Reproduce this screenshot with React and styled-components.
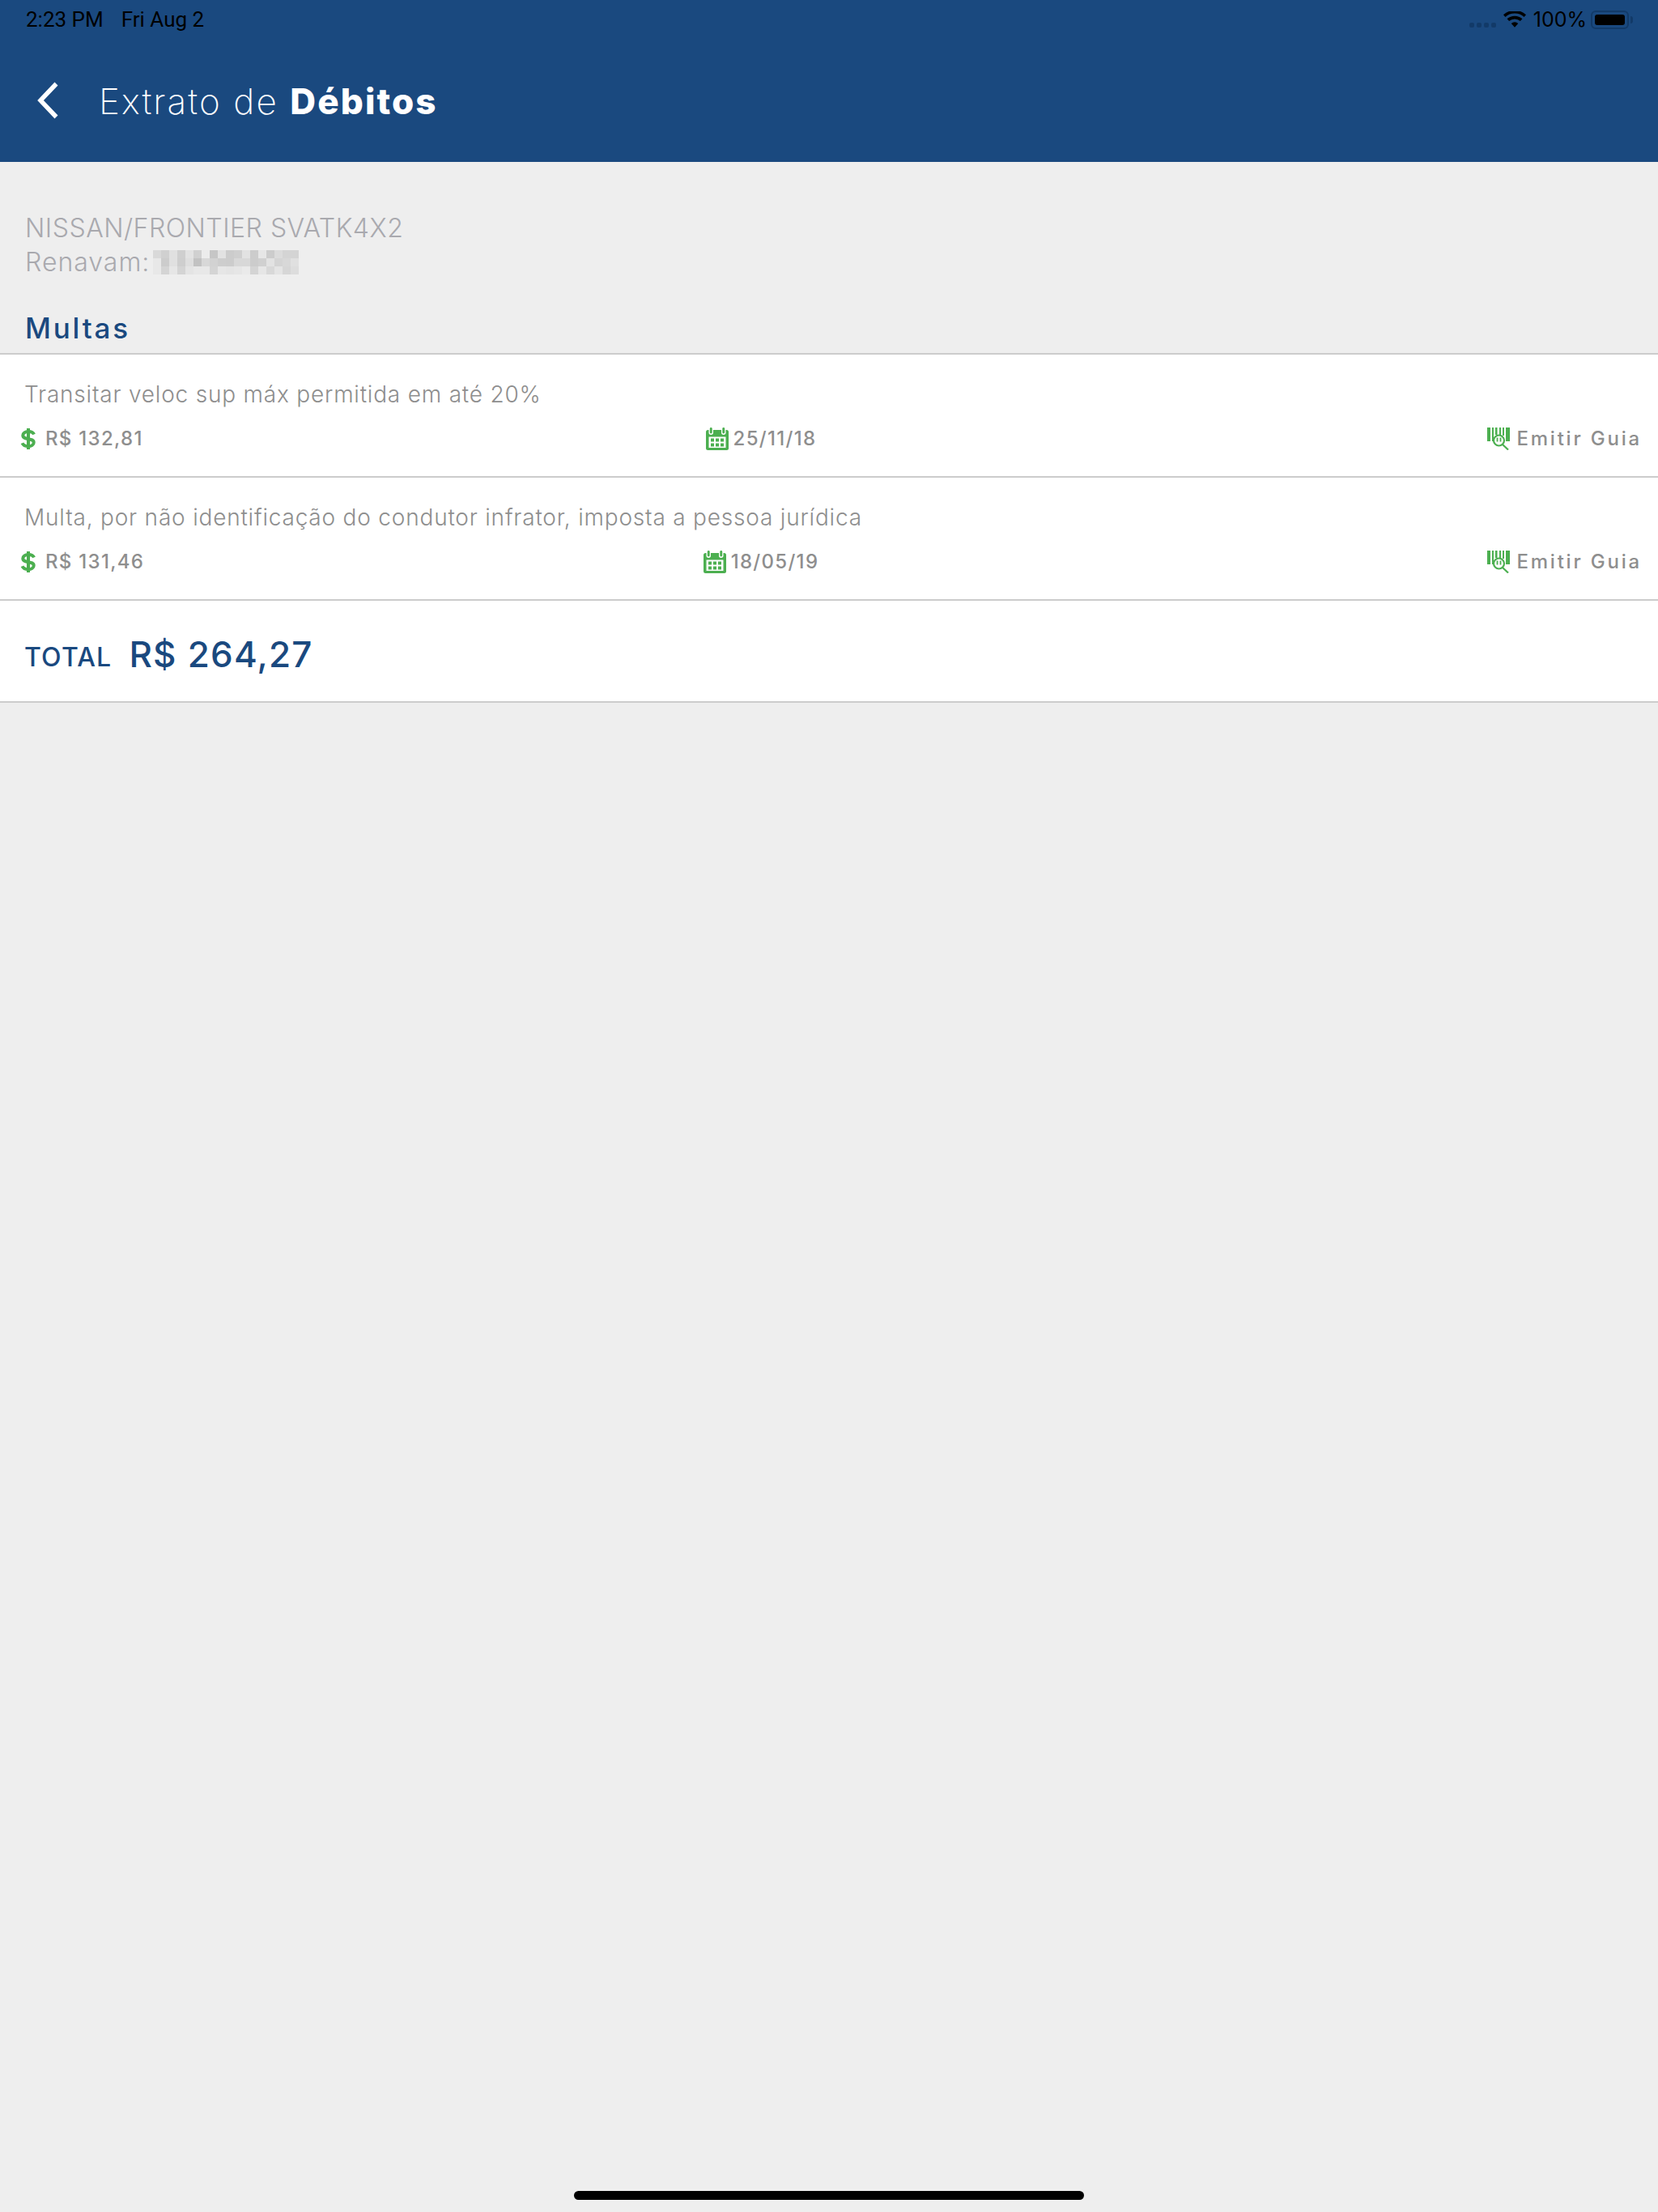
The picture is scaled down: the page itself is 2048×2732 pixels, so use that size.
import styled, { createGlobalStyle } from "styled-components";

const Global = createGlobalStyle`
  html, body {
    margin: 0;
    padding: 0;
    background-color: #eeeeee;
  }
  * {
    box-sizing: border-box;
  }
`;

const SHADES = [
  "d9d9d9 d0d0d0 e0e0e0 cfcfcf e2e2e2 d0d0d0 ececec c6c6c6 e2e2e2 cccccc cfcfcf e2e2e2 cccccc e6e6e6 cccccc dbdbdb d4d4d4 d4d4d4",
  "e8e8e8 cccccc e0e0e0 cecece dedede c2c2c2 d8d8d8 d2d2d2 cdcdcd cccccc d8d8d8 d8d8d8 cccccc d0d0d0 e2e2e2 d4d4d4 d8d8d8 e0e0e0",
  "e8e8e8 d4d4d4 e6e6e6 d4d4d4 e4e4e4 e8e8e8 e8e8e8 d4d4d4 e6e6e6 e4e4e4 e6e6e6 eaeaea d4d4d4 e6e6e6 d8d8d8 e4e4e4 d6d6d6 dddddd",
].join(" ").split(" ");

const fines = [
  {
    title: "Transitar veloc sup máx permitida em até 20%",
    amount: "R$ 132,81",
    date: "25/11/18",
  },
  {
    title: "Multa, por não identificação do condutor infrator, imposta a pessoa jurídica",
    amount: "R$ 131,46",
    date: "18/05/19",
  },
];

function DollarIcon() {
  return (
    <DollarGlyph viewBox="0 0 20 28">
      <path d="M10 1v26" stroke="#4caf50" strokeWidth="4" fill="none" />
      <path
        d="M17 8.500C16 6 13.500 5 10 5 6 5 3.300 6.800 3.300 9.800c0 6.400 13.400 2.400 13.400 8.600 0 3-3 4.800-6.700 4.800-3.900 0-6.300-1.300-7.500-4"
        stroke="#4caf50"
        strokeWidth="4"
        fill="none"
      />
    </DollarGlyph>
  );
}

function CalendarIcon() {
  return (
    <CalendarGlyph viewBox="0 0 28 28">
      <rect x="0" y="3" width="28" height="25" rx="2.500" fill="#4caf50" />
      <rect x="3.500" y="0" width="5.500" height="9" rx="2.700" fill="#ffffff" />
      <rect x="19" y="0" width="5.500" height="9" rx="2.700" fill="#ffffff" />
      <rect x="4.800" y="0" width="2.900" height="7.500" rx="1.400" fill="#4caf50" />
      <rect x="20.300" y="0" width="2.900" height="7.500" rx="1.400" fill="#4caf50" />
      <rect x="3.500" y="11.500" width="21" height="13.500" fill="#ffffff" />
      <g fill="#4caf50">
        <rect x="6" y="13.500" width="4" height="4" />
        <rect x="12" y="13.500" width="4" height="4" />
        <rect x="18" y="13.500" width="4" height="4" />
        <rect x="6" y="19.500" width="4" height="4" />
        <rect x="12" y="19.500" width="4" height="4" />
        <rect x="18" y="19.500" width="4" height="4" />
      </g>
    </CalendarGlyph>
  );
}

function BarcodeIcon() {
  return (
    <BarcodeGlyph viewBox="0 0 28 28">
      <g fill="#4caf50">
        <rect x="0" y="0" width="4" height="17" />
        <rect x="6" y="0" width="2" height="17" />
        <rect x="10" y="0" width="2.500" height="9" />
        <rect x="15" y="0" width="2" height="9" />
        <rect x="19" y="0" width="2" height="10" />
        <rect x="23" y="0" width="5" height="17" />
      </g>
      <circle cx="14.500" cy="16" r="6.500" fill="#ffffff" stroke="#4caf50" strokeWidth="2.200" />
      <path d="M19 21l7 6.500" stroke="#4caf50" strokeWidth="2.200" />
      <path d="M12.500 12.500v5M16.500 12.500v5" stroke="#4caf50" strokeWidth="1.800" />
    </BarcodeGlyph>
  );
}

function FineRow({ fine }) {
  return (
    <Row>
      <RowTitle>{fine.title}</RowTitle>
      <Meta>
        <MetaItem>
          <DollarIcon />
          <Amount>{fine.amount}</Amount>
        </MetaItem>
        <DateItem>
          <CalendarIcon />
          <DateText>{fine.date}</DateText>
        </DateItem>
        <GuiaItem>
          <BarcodeIcon />
          <GuiaText>Emitir Guia</GuiaText>
        </GuiaItem>
      </Meta>
    </Row>
  );
}

export default function App() {
  return (
    <Page>
      <Global />
      <Header>
        <StatusBar>
          <StatusLeft>
            <span>2:23 PM</span>
            <span>Fri Aug 2</span>
          </StatusLeft>
          <StatusRight>
            <Signal>
              <i />
              <i />
              <i />
              <i />
            </Signal>
            <svg width="28" height="21" viewBox="0 0 30 22">
              <path
                d="M15 21l-4.600-5.200a6.800 6.800 0 0 1 9.200 0zM7.600 12.700l-2.700-3a15 15 0 0 1 20.200 0l-2.700 3a11 11 0 0 0-14.800 0zM2.600 7.200L0 4.300a22.200 22.200 0 0 1 30 0l-2.600 2.900a18.500 18.500 0 0 0-24.800 0z"
                fill="#000"
              />
            </svg>
            <Percent>100%</Percent>
            <Battery>
              <BatteryFill />
              <BatteryTip />
            </Battery>
          </StatusRight>
        </StatusBar>
        <TitleBar>
          <svg width="27" height="46" viewBox="0 0 27 46">
            <path d="M23.500 2.500L4 23l19.500 20.500" stroke="#fff" strokeWidth="5.500" fill="none" />
          </svg>
          <Title>
            Extrato de <strong>Débitos</strong>
          </Title>
        </TitleBar>
      </Header>

      <Vehicle>
        <VehicleName>NISSAN/FRONTIER SVATK4X2</VehicleName>
        <Renavam>
          Renavam:
          <Pixelated>
            {SHADES.map((shade, i) => (
              <Pixel key={i} $shade={shade} />
            ))}
          </Pixelated>
        </Renavam>
      </Vehicle>

      <SectionTitle>Multas</SectionTitle>

      {fines.map((fine) => (
        <FineRow key={fine.date} fine={fine} />
      ))}

      <TotalRow>
        <TotalLabel>TOTAL</TotalLabel>
        <TotalValue>R$ 264,27</TotalValue>
      </TotalRow>

      <HomeBar />
    </Page>
  );
}

const Page = styled.div`
  width: 2048px;
  height: 2732px;
  display: flex;
  flex-direction: column;
  background-color: #eeeeee;
  font-family: "Inter", sans-serif;
`;

const Header = styled.header`
  height: 200px;
  display: flex;
  flex-direction: column;
  flex-shrink: 0;
  background-color: #1a497f;
`;

const StatusBar = styled.div`
  height: 48px;
  padding: 0 30px 0 32px;
  display: flex;
  justify-content: space-between;
  align-items: center;
  color: #000;
  font-family: "Roboto", sans-serif;
  font-size: 26px;
`;

const StatusLeft = styled.div`
  display: flex;
  gap: 22px;
`;

const StatusRight = styled.div`
  display: flex;
  align-items: center;
  gap: 9px;
`;

const Signal = styled.div`
  display: flex;
  gap: 3px;
  margin-top: 14px;

  i {
    width: 6px;
    height: 6px;
    border-radius: 2px;
    background-color: #123a68;
  }
`;

const Percent = styled.span`
  margin-right: -4px;
  font-family: "Inter", sans-serif;
  font-size: 25px;
`;

const Battery = styled.div`
  position: relative;
  width: 47px;
  height: 23px;
  padding: 3px;
  border: 2px solid #123a68;
  border-radius: 6px;
  margin-right: 6px;
`;

const BatteryFill = styled.div`
  width: 100%;
  height: 100%;
  border-radius: 3px;
  background-color: #000;
`;

const BatteryTip = styled.div`
  position: absolute;
  right: -7px;
  top: 5px;
  width: 3px;
  height: 9px;
  border-radius: 0 3px 3px 0;
  background-color: #123a68;
`;

const TitleBar = styled.div`
  padding: 53px 0 0 46px;
  display: flex;
  align-items: flex-start;
  gap: 49px;
`;

const Title = styled.h1`
  margin: 0;
  color: #fff;
  font-size: 44px;
  font-weight: 200;
  line-height: 48px;
  letter-spacing: 2.1px;

  strong {
    font-weight: 800;
  }
`;

const Vehicle = styled.div`
  padding: 61px 30px 0 31px;
  color: #a9a9ae;
  font-size: 32px;
  font-weight: 300;
  line-height: 42px;
`;

const VehicleName = styled.div`
  letter-spacing: 0.5px;
`;

const Renavam = styled.div`
  display: flex;
  align-items: center;
  letter-spacing: 1px;
`;

const Pixelated = styled.div`
  width: 180px;
  height: 30px;
  margin-left: 4px;
  display: grid;
  grid-template-columns: repeat(18, 10px);
  grid-auto-rows: 10px;
`;

const Pixel = styled.div`
  background-color: #${(p) => p.$shade};
`;

const SectionTitle = styled.h2`
  margin: 0;
  padding: 39px 31px 0;
  height: 91px;
  color: #1a497f;
  font-size: 35px;
  font-weight: 500;
  line-height: 42px;
  letter-spacing: 2.800px;
`;

const Row = styled.div`
  height: 152px;
  padding: 31px 20px 0 30px;
  border-top: 2px solid #cccccc;
  background-color: #fff;
`;

const RowTitle = styled.div`
  color: #8e8e8e;
  font-size: 28px;
  font-weight: 300;
  line-height: 36px;
  letter-spacing: 0.800px;
`;

const Meta = styled.div`
  margin-top: 22px;
  margin-left: -5px;
  display: grid;
  grid-template-columns: 815px 200px 1fr;
  align-items: center;
  color: #8e8e8e;
  font-size: 24px;
  font-weight: 500;
`;

const MetaItem = styled.div`
  display: flex;
  align-items: center;
`;

const DateItem = styled(MetaItem)`
  justify-self: center;
`;

const GuiaItem = styled(MetaItem)`
  justify-self: end;
`;

const Amount = styled.span`
  margin-left: 11px;
  letter-spacing: 1.300px;
`;

const DateText = styled.span`
  margin-left: 6px;
  letter-spacing: 1.300px;
`;

const GuiaText = styled.span`
  margin-left: 8px;
  letter-spacing: 2.800px;
`;

const DollarGlyph = styled.svg`
  width: 20px;
  height: 28px;
`;

const CalendarGlyph = styled.svg`
  width: 28px;
  height: 28px;
`;

const BarcodeGlyph = styled.svg`
  width: 28px;
  height: 28px;
`;

const TotalRow = styled.div`
  height: 128px;
  padding: 8px 30px 0;
  display: flex;
  align-items: center;
  gap: 21px;
  border-top: 2px solid #cccccc;
  border-bottom: 2px solid #cccccc;
  background-color: #fff;
  color: #1a497f;
`;

const TotalLabel = styled.span`
  font-size: 32px;
  font-weight: 500;
  margin-top: 6px;
  letter-spacing: 1.200px;
`;

const TotalValue = styled.span`
  font-size: 44px;
  font-weight: 500;
  letter-spacing: 1.200px;
`;

const HomeBar = styled.div`
  width: 630px;
  height: 11px;
  margin: auto auto 15px;
  border-radius: 6px;
  background-color: #000;
`;
